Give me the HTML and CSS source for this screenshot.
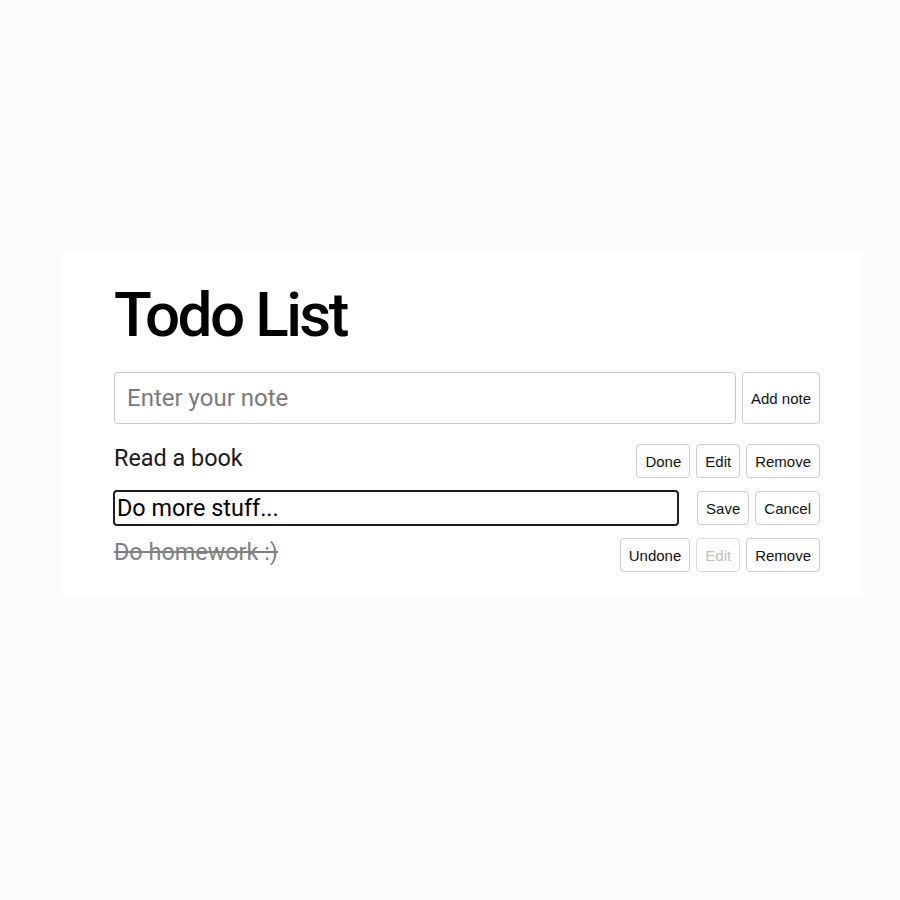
FILE: index.html
```html
<!DOCTYPE html>
<html lang="en">
<head>
<meta charset="utf-8">
<title>Todo List</title>
<link rel="stylesheet" href="styles.css">
</head>
<body>
<div class="page">
  <main class="card">
    <h1 class="title">Todo List</h1>
    <form class="add-form">
      <input class="add-input" type="text" placeholder="Enter your note">
      <button class="btn btn-add" type="button">Add note</button>
    </form>
    <ul class="list">
      <li class="item">
        <span class="label">Read a book</span>
        <div class="actions">
          <button class="btn" type="button">Done</button>
          <button class="btn" type="button">Edit</button>
          <button class="btn" type="button">Remove</button>
        </div>
      </li>
      <li class="item item-editing">
        <input class="edit-input" type="text" value="Do more stuff...">
        <div class="actions">
          <button class="btn" type="button">Save</button>
          <button class="btn" type="button">Cancel</button>
        </div>
      </li>
      <li class="item">
        <span class="label label-done">Do homework :)</span>
        <div class="actions">
          <button class="btn" type="button">Undone</button>
          <button class="btn" type="button" disabled>Edit</button>
          <button class="btn" type="button">Remove</button>
        </div>
      </li>
    </ul>
  </main>
</div>
</body>
</html>
```

FILE: styles.css
```css
* { box-sizing: border-box; }

html, body {
  margin: 0;
  padding: 0;
}

body {
  background: #fcfcfc;
  font-family: Roboto, "Liberation Sans", Arial, sans-serif;
  color: #1a1a1a;
  min-height: 900px;
}

.page {
  padding: 252px 38px 0 62px;
}

.card {
  width: 800px;
  background: #ffffff;
  padding: 27px 42px 25px 52px;
}

.title {
  margin: 0 0 21px;
  font-size: 62px;
  line-height: 72px;
  font-weight: 500;
  letter-spacing: -2.6px;
  color: #000;
}

.add-form {
  display: flex;
  gap: 6px;
  margin: 0;
}

.add-input {
  flex: 1;
  height: 52px;
  border: 1px solid #c8c8c8;
  border-radius: 4px;
  padding: 0 12px;
  font-family: Roboto, "Liberation Sans", Arial, sans-serif;
  font-size: 24px;
  color: #222;
  background: #fff;
  outline: none;
}

.add-input::placeholder {
  color: #7a7a7a;
}

.btn {
  height: 34px;
  padding: 0 8px;
  border: 1px solid #cdcdcd;
  border-radius: 4px;
  background: #fff;
  color: #111;
  font-family: "Liberation Sans", Arial, sans-serif;
  font-size: 15px;
  cursor: pointer;
}

.btn:disabled {
  color: #c0c0c0;
  border-color: #dcdcdc;
  cursor: default;
}

.btn-add {
  height: 52px;
  width: 78px;
  padding: 0;
}

.list {
  list-style: none;
  margin: 20px 0 0;
  padding: 0;
  display: flex;
  flex-direction: column;
  gap: 12px;
}

.item {
  display: flex;
  align-items: center;
  min-height: 34px;
}

.label {
  flex: 1;
  font-size: 23.4px;
  line-height: 28px;
  align-self: flex-start;
  color: #1a1a1a;
}

.label-done {
  color: #808080;
  text-decoration: line-through;
}

.edit-input {
  flex: 1;
  min-width: 0;
  height: 36px;
  margin: 0 18px 0 -1px;
  border: 2px solid #1e1e1e;
  border-radius: 4px;
  padding: 0 2px;
  font-family: Roboto, "Liberation Sans", Arial, sans-serif;
  font-size: 23.4px;
  color: #000;
  background: #fff;
  outline: none;
}

.actions {
  display: flex;
  gap: 6px;
}
```
